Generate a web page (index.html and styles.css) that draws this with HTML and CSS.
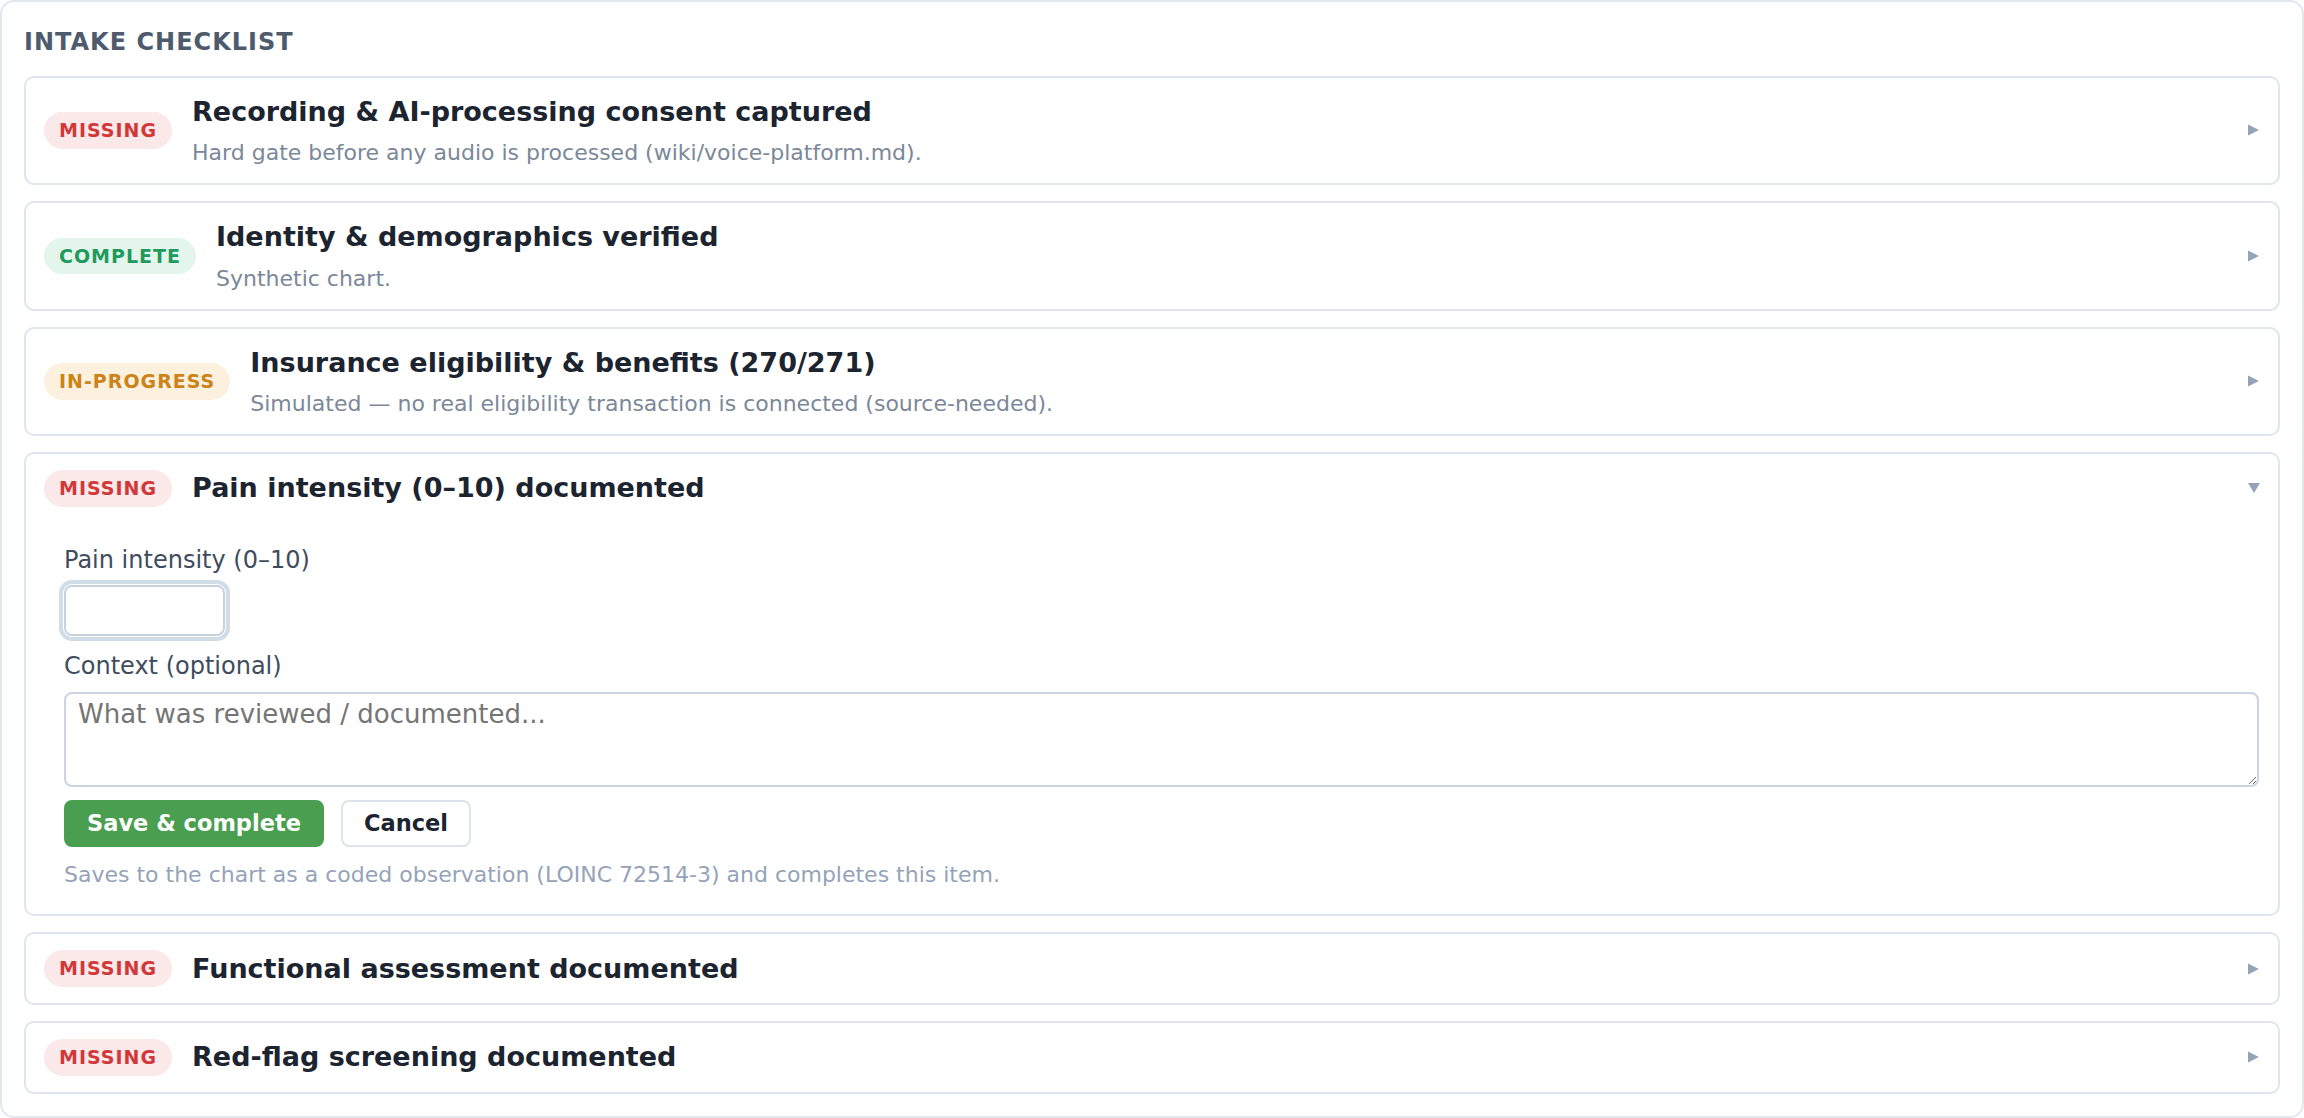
FILE: index.html
```html
<!DOCTYPE html>
<html lang="en">
<head>
    <meta charset="UTF-8">
    <meta name="viewport" content="width=device-width, initial-scale=1.0" />
    <title>Intake checklist</title>
    <link rel="stylesheet" href="styles.css">
</head>
<body>
    <main class="checklist">
        <h2 class="checklist_title">Intake checklist</h2>
        <ul class="items">
            <li class="item">
                <div class="item_head">
                    <span class="badge badge_missing">Missing</span>
                    <div class="item_text">
                        <div class="item_title">Recording &amp; AI-processing consent captured</div>
                        <div class="item_desc">Hard gate before any audio is processed (wiki/voice-platform.md).</div>
                    </div>
                    <svg class="chevron" viewBox="0 0 12 12"><polygon points="0,0.5 11,6 0,11.5" /></svg>
                </div>
            </li>
            <li class="item">
                <div class="item_head">
                    <span class="badge badge_complete">Complete</span>
                    <div class="item_text">
                        <div class="item_title">Identity &amp; demographics verified</div>
                        <div class="item_desc">Synthetic chart.</div>
                    </div>
                    <svg class="chevron" viewBox="0 0 12 12"><polygon points="0,0.5 11,6 0,11.5" /></svg>
                </div>
            </li>
            <li class="item">
                <div class="item_head">
                    <span class="badge badge_progress">In-progress</span>
                    <div class="item_text">
                        <div class="item_title">Insurance eligibility &amp; benefits (270/271)</div>
                        <div class="item_desc">Simulated — no real eligibility transaction is connected (source-needed).</div>
                    </div>
                    <svg class="chevron" viewBox="0 0 12 12"><polygon points="0,0.5 11,6 0,11.5" /></svg>
                </div>
            </li>
            <li class="item item_open">
                <div class="item_head">
                    <span class="badge badge_missing">Missing</span>
                    <div class="item_text">
                        <div class="item_title">Pain intensity (0–10) documented</div>
                    </div>
                    <svg class="chevron" viewBox="0 0 12 12"><polygon points="0,1 12,1 6,11" /></svg>
                </div>
                <form class="item_body">
                    <label for="pain_score">Pain intensity (0–10)</label>
                    <input id="pain_score" name="pain_score" class="score_input">
                    <label for="pain_context">Context (optional)</label>
                    <textarea id="pain_context" name="pain_context" placeholder="What was reviewed / documented..."></textarea>
                    <div class="actions">
                        <button type="button" class="btn btn_save">Save &amp; complete</button>
                        <button type="button" class="btn btn_cancel">Cancel</button>
                    </div>
                    <p class="note">Saves to the chart as a coded observation (LOINC 72514-3) and completes this item.</p>
                </form>
            </li>
            <li class="item">
                <div class="item_head">
                    <span class="badge badge_missing">Missing</span>
                    <div class="item_text">
                        <div class="item_title">Functional assessment documented</div>
                    </div>
                    <svg class="chevron" viewBox="0 0 12 12"><polygon points="0,0.5 11,6 0,11.5" /></svg>
                </div>
            </li>
            <li class="item">
                <div class="item_head">
                    <span class="badge badge_missing">Missing</span>
                    <div class="item_text">
                        <div class="item_title">Red-flag screening documented</div>
                    </div>
                    <svg class="chevron" viewBox="0 0 12 12"><polygon points="0,0.5 11,6 0,11.5" /></svg>
                </div>
            </li>
        </ul>
    </main>
</body>
</html>
```

FILE: styles.css
```css
html {
    font-family: "DejaVu Sans", sans-serif;
}

body {
    margin: 0;
    background-color: white;
}

.checklist {
    box-sizing: border-box;
    min-height: 100vh;
    border: 2px solid #e2e8f0;
    border-radius: 14px;
    padding: 24px 22px 22px;
}

.checklist_title {
    margin: 0 0 16px;
    font-size: 24px;
    line-height: 1.4;
    font-weight: bold;
    letter-spacing: 1px;
    text-transform: uppercase;
    color: #4d5b6c;
}

.items {
    list-style: none;
    margin: 0;
    padding: 0;
    display: flex;
    flex-direction: column;
    gap: 16px;
}

.item {
    border: 2px solid #dfe5ee;
    border-radius: 10px;
}

.item_head {
    display: flex;
    align-items: center;
    gap: 20px;
    padding: 16px 18px;
}

.item_text {
    flex: 1;
    display: flex;
    flex-direction: column;
    gap: 8px;
}

.item_title {
    font-size: 27px;
    line-height: 1.35;
    font-weight: bold;
    color: #1c2430;
}

.item_desc {
    font-size: 22px;
    line-height: 1.32;
    color: #7b8899;
}

.badge {
    flex-shrink: 0;
    padding: 5px 15px;
    border-radius: 999px;
    font-size: 19px;
    line-height: 1.4;
    font-weight: bold;
    letter-spacing: 1px;
    text-transform: uppercase;
}

.badge_missing {
    background-color: #fbe8e8;
    color: #d2383a;
}

.badge_complete {
    background-color: #e4f5ec;
    color: #1f9a5c;
}

.badge_progress {
    background-color: #fcf1de;
    color: #cc8419;
}

.chevron {
    flex-shrink: 0;
    width: 12px;
    height: 12px;
    fill: #94a3b8;
}

.item_body {
    padding: 21px 19px 25px 38px;
}

.item_body label {
    display: block;
    margin-bottom: 8px;
    font-size: 24px;
    line-height: 1.4;
    color: #3f4c5e;
}

.score_input {
    display: block;
    box-sizing: border-box;
    width: 161px;
    height: 51px;
    margin: 0 0 14px 0;
    border: 2px solid #c6d3de;
    border-radius: 8px;
    box-shadow: 0 0 0 1px white, 0 0 0 5px #d0dde8;
    outline: none;
    font-family: inherit;
    font-size: 24px;
}

textarea {
    display: block;
    box-sizing: border-box;
    width: 100%;
    height: 95px;
    padding: 5px 12px;
    border: 2px solid #cbd5e1;
    border-radius: 8px;
    outline: none;
    font-family: inherit;
    font-size: 26px;
}

textarea::placeholder {
    color: #757575;
}

.actions {
    display: flex;
    gap: 17px;
    margin-top: 13px;
}

.btn {
    height: 47px;
    padding: 0 21px;
    border-radius: 8px;
    font-family: inherit;
    font-size: 22.5px;
    font-weight: bold;
    cursor: pointer;
}

.btn_save {
    background-color: #4a9e4f;
    border: 2px solid #4a9e4f;
    color: white;
}

.btn_cancel {
    background-color: white;
    border: 2px solid #dde3eb;
    color: #1c2430;
}

.note {
    margin: 13px 0 0;
    font-size: 22px;
    line-height: 1.35;
    color: #94a3b8;
}
```
